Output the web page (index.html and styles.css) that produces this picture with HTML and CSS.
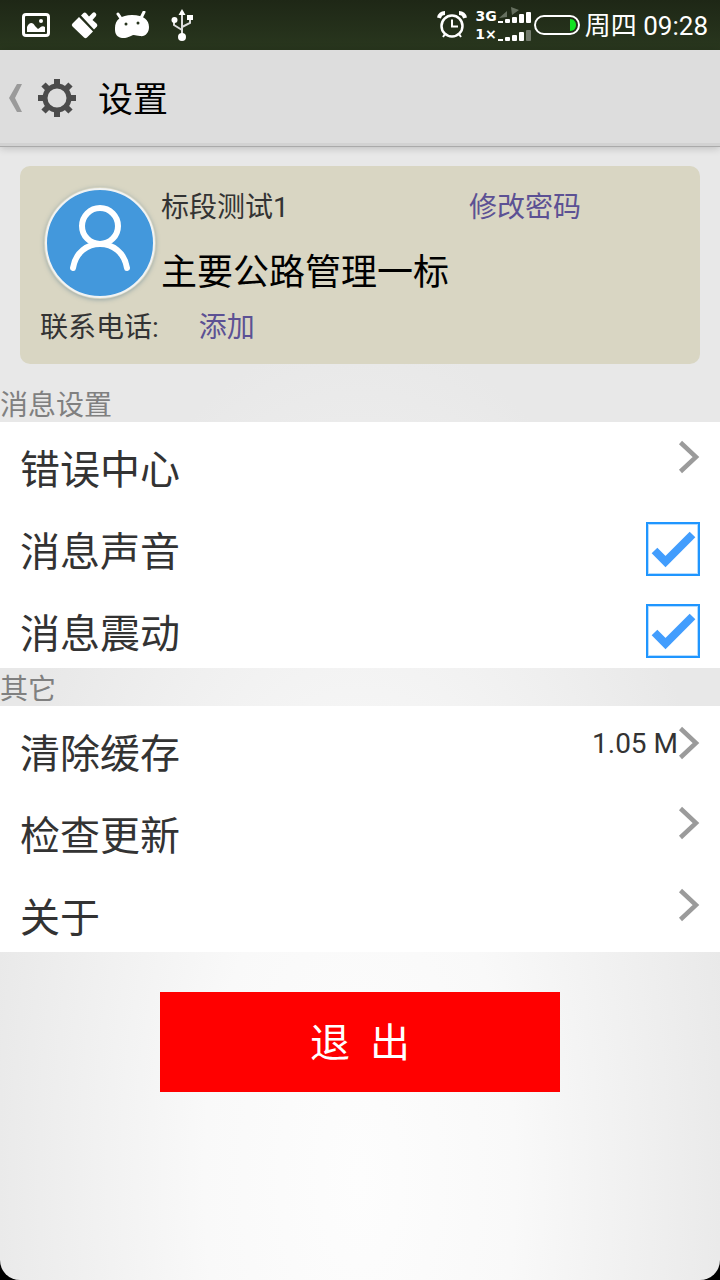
FILE: index.html
```html
<!DOCTYPE html>
<html lang="zh-CN">
<head>
<meta charset="utf-8">
<meta name="viewport" content="width=device-width, initial-scale=1">
<title>设置</title>
<link rel="stylesheet" href="styles.css">
</head>
<body>
<svg class="defs" aria-hidden="true">
  <symbol id="chevron" viewBox="0 0 22 34"><path d="M2.500 2.500 L18 17 L2.500 31.500" fill="none" stroke="#9b9b9b" stroke-width="4.500"/></symbol>
</svg>
<div class="app">
  <div class="status">
    <div class="status-icons">
      <svg width="28" height="24" viewBox="0 0 28 24"><rect x="1.500" y="1.500" width="25" height="21" rx="2.500" fill="none" stroke="#fff" stroke-width="3"/><path d="M5 19V14C7 9 11 9 13 13L16 16C18 15 20 12 23 14V19Z" fill="#fff"/><circle cx="19" cy="8" r="2" fill="#fff"/></svg>
      <svg width="28" height="28" viewBox="0 0 28 28" fill="#fff"><path d="M8 6L22 20.500L16 26.500Q14.500 28 13 26.500L1.500 15.500Q0 14 1.500 12.500Z"/><path d="M10 4.500L12.500 2Q14 1 15.500 2.500L18 5.500L21.500 2Q23 .5 24.500 2Q26 3.500 25 5L21.500 9L25.500 12.500Q27 14 26 15.500L23 18.500Z"/></svg>
      <svg width="36" height="28" viewBox="0 0 36 28"><path d="M4 3L8 9M30 1L27 7" stroke="#fff" stroke-width="3" stroke-linecap="round"/><path d="M1 17C1 9 7 4 18 4C30 4 35 9 35 16C35 22 31 26 26 25C22 25 20 23 17 25C13 27 8 28 5 26C1 24 1 20 1 17Z" fill="#fff"/><circle cx="12" cy="13" r="1.500" fill="#26331c"/><circle cx="24" cy="12" r="1.500" fill="#26331c"/></svg>
      <svg class="usb" width="22" height="32" viewBox="0 0 22 32"><path d="M11 4V27M3 12V16L11 21M19 9V14L11 18" fill="none" stroke="#ddd" stroke-width="2"/><g fill="#fff"><path d="M11 0L14.500 6H7.500Z"/><circle cx="11" cy="28" r="4"/><circle cx="3.500" cy="11" r="3"/><path d="M16 6h6v5h-6z"/></g></svg>
    </div>
    <div class="status-info">
      <svg width="30" height="28" viewBox="0 0 30 28" fill="none" stroke="#fff"><circle cx="15" cy="15" r="10.500" stroke-width="2.500"/><path d="M15 8.500V15.500H21M8 23L6 26M22 23L24 26" stroke-width="2"/><path d="M2 7Q3 2 8 2M22 2Q27 2 28 7" stroke-width="4"/></svg>
      <div class="signal">
        <div class="net"><span>3G</span><svg width="34" height="18" viewBox="0 0 34 18" fill="#fff"><path d="M1 11L9 4V10ZM13 0L21 3L14 8Z" fill="#66705f"/><path d="M0 14h5v2H0z"/><rect x="7" y="12" width="5" height="4" rx="1"/><rect x="14" y="10" width="5" height="6" rx="1"/><rect x="21" y="7" width="5" height="9" rx="1"/><rect x="28" y="5" width="5" height="11" rx="1"/></svg></div>
        <div class="net"><span>1×</span><svg width="34" height="18" viewBox="0 0 34 18" fill="#fff"><path d="M0 14h5v2H0z"/><rect x="7" y="12" width="5" height="4" rx="1"/><rect x="14" y="10" width="5" height="6" rx="1"/><rect x="21" y="7" width="5" height="9" rx="1"/><rect x="28" y="5" width="5" height="11" rx="1" fill="#727a6c"/></svg></div>
      </div>
      <svg class="battery" width="46" height="20" viewBox="0 0 46 20"><rect x="1" y="1" width="44" height="18" rx="9" fill="none" stroke="#fff" stroke-width="2"/><path d="M36 4C44 4 44 16 36 16Z" fill="#12e322"/></svg>
      <span class="time">周四 09:28</span>
    </div>
  </div>

  <header class="bar">
    <button class="back" type="button" aria-label="返回">
      <svg width="14" height="28" viewBox="0 0 14 28"><path d="M8 0H13L6 14L13 28H8L0 14Z" fill="#9a9a9a"/></svg>
    </button>
    <svg class="gear" width="38" height="38" viewBox="0 0 38 38" fill="none" stroke="#4b4b4b"><circle cx="19" cy="19" r="12" stroke-width="5"/><path d="M19 0V6M19 32V38M0 19H6M32 19H38M5.500 5.500L10 10M28 28L32.500 32.500M32.500 5.500L28 10M10 28L5.500 32.500" stroke-width="6"/></svg>
    <h1>设置</h1>
  </header>

  <main>
    <section class="card">
      <div class="profile">
        <svg class="avatar" width="112" height="112" viewBox="0 0 112 112"><circle cx="56" cy="56" r="54" fill="#4398dc" stroke="#f1f3f3" stroke-width="2"/><g fill="none" stroke="#fff" stroke-width="6" stroke-linecap="round"><circle cx="56" cy="39" r="18"/><path d="M29 81C34 49 78 49 83 81"/></g></svg>
        <div class="who">
          <div class="account"><span>标段测试1</span><a href="#password">修改密码</a></div>
          <div class="org">主要公路管理一标</div>
        </div>
      </div>
      <div class="phone"><span>联系电话:</span><a href="#phone">添加</a></div>
    </section>

    <h2>消息设置</h2>
    <div class="list">
      <button class="row" type="button"><span>错误中心</span><svg class="chevron"><use href="#chevron"/></svg></button>
      <label class="row" for="sound"><span>消息声音</span><span class="check"><input id="sound" type="checkbox" checked><svg viewBox="0 0 54 54"><path d="M8.500 28.500L19.500 39.500L46.500 12.500" fill="none" stroke="#429dfd" stroke-width="8"/></svg></span></label>
      <label class="row" for="vibrate"><span>消息震动</span><span class="check"><input id="vibrate" type="checkbox" checked><svg viewBox="0 0 54 54"><path d="M8.500 28.500L19.500 39.500L46.500 12.500" fill="none" stroke="#429dfd" stroke-width="8"/></svg></span></label>
    </div>

    <h2>其它</h2>
    <div class="list">
      <button class="row" type="button"><span>清除缓存</span><span class="value">1.05 M<svg class="chevron"><use href="#chevron"/></svg></span></button>
      <button class="row" type="button"><span>检查更新</span><svg class="chevron"><use href="#chevron"/></svg></button>
      <button class="row" type="button"><span>关于</span><svg class="chevron"><use href="#chevron"/></svg></button>
    </div>

    <button class="logout" type="button">退&nbsp; 出</button>
  </main>
</div>
</body>
</html>
```
FILE: styles.css
```css
* { box-sizing: border-box; }
body {
  margin: 0;
  background: #000;
  color: #333;
  font: 28px/38px Roboto, "Noto Sans CJK SC", sans-serif;
}
button { margin: 0; padding: 0; border: 0; background: none; color: inherit; font: inherit; cursor: pointer; }
svg { display: block; flex: none; }
a { color: #5c5194; text-decoration: none; }
h1, h2 { margin: 0; font-weight: 400; }
.defs { position: absolute; width: 0; height: 0; }
.app {
  min-height: 100vh;
  border-radius: 0 0 20px 20px;
  overflow: hidden;
  background: radial-gradient(ellipse 54% 66% at 50% 92%, #fdfdfd 0%, #f9f9f9 40%, #e8e8e8 100%);
}

.status {
  display: flex;
  justify-content: space-between;
  align-items: center;
  height: 50px;
  padding: 0 12px 0 22px;
  background: linear-gradient(#1e2716, #29371e);
  color: #fff;
}
.status-icons { display: flex; align-items: center; gap: 21px; }
.status-icons svg:nth-child(3) { margin-left: -6px; }
.status-info { display: flex; align-items: center; }
.signal { margin-left: 8px; font: 700 14px/18px "DejaVu Sans", sans-serif; }
.net { display: flex; justify-content: flex-end; gap: 1px; }
.battery { margin: 0 5px 0 2px; }
.time { padding-top: 2px; font-size: 26px; }

.bar {
  display: flex;
  align-items: center;
  height: 97px;
  padding-left: 9px;
  background: #ddd;
  border-bottom: 1px solid #aaa;
  box-shadow: inset 0 -3px #d2d2d2, 0 1px 8px #0003;
}
.gear { margin: 0 22px 0 15px; }
h1 { padding-top: 5px; color: #000; font-size: 35px; line-height: 48px; }

.card { margin: 19px 20px 20px; padding: 23px 20px 17px; border-radius: 10px; background: #d9d6c3; }
.profile { display: flex; gap: 5px; }
.avatar { margin: -2px 0 10px 4px; border-radius: 50%; box-shadow: 0 1px 4px #5f7f8f88; }
.who { flex: 1; }
.account { display: grid; grid-template-columns: 308px 1fr; }
.org { margin-top: 22px; color: #000; font-size: 36px; line-height: 48px; }
.phone { display: flex; gap: 40px; }

h2 { padding-top: 6px; color: #808080; font-size: 28px; line-height: 32px; }
.list { background: #fff; }
.row {
  display: flex;
  justify-content: space-between;
  align-items: flex-start;
  width: 100%;
  padding: 16px 20px 0;
  font-size: 40px;
  line-height: 66px;
  text-align: left;
}
.chevron { width: 22px; height: 34px; margin-top: 2px; }
.value { display: flex; align-items: center; font-size: 28px; line-height: 44px; }
.value .chevron { margin-top: -2px; }
.check { display: grid; width: 54px; height: 54px; margin-top: 2px; }
.check > * { grid-area: 1 / 1; }
.check input {
  appearance: none;
  width: 54px;
  height: 54px;
  margin: 0;
  border: 2px solid #1f96ff;
  box-shadow: inset 0 0 0 1px #b5dcff;
}
.check svg { visibility: hidden; pointer-events: none; }
.check input:checked + svg { visibility: visible; }

.logout {
  display: block;
  width: 400px;
  max-width: 100%;
  margin: 40px auto;
  padding: 22px 0 18px;
  background: #f00;
  color: #fff;
  font-size: 40px;
  line-height: 60px;
}
```
